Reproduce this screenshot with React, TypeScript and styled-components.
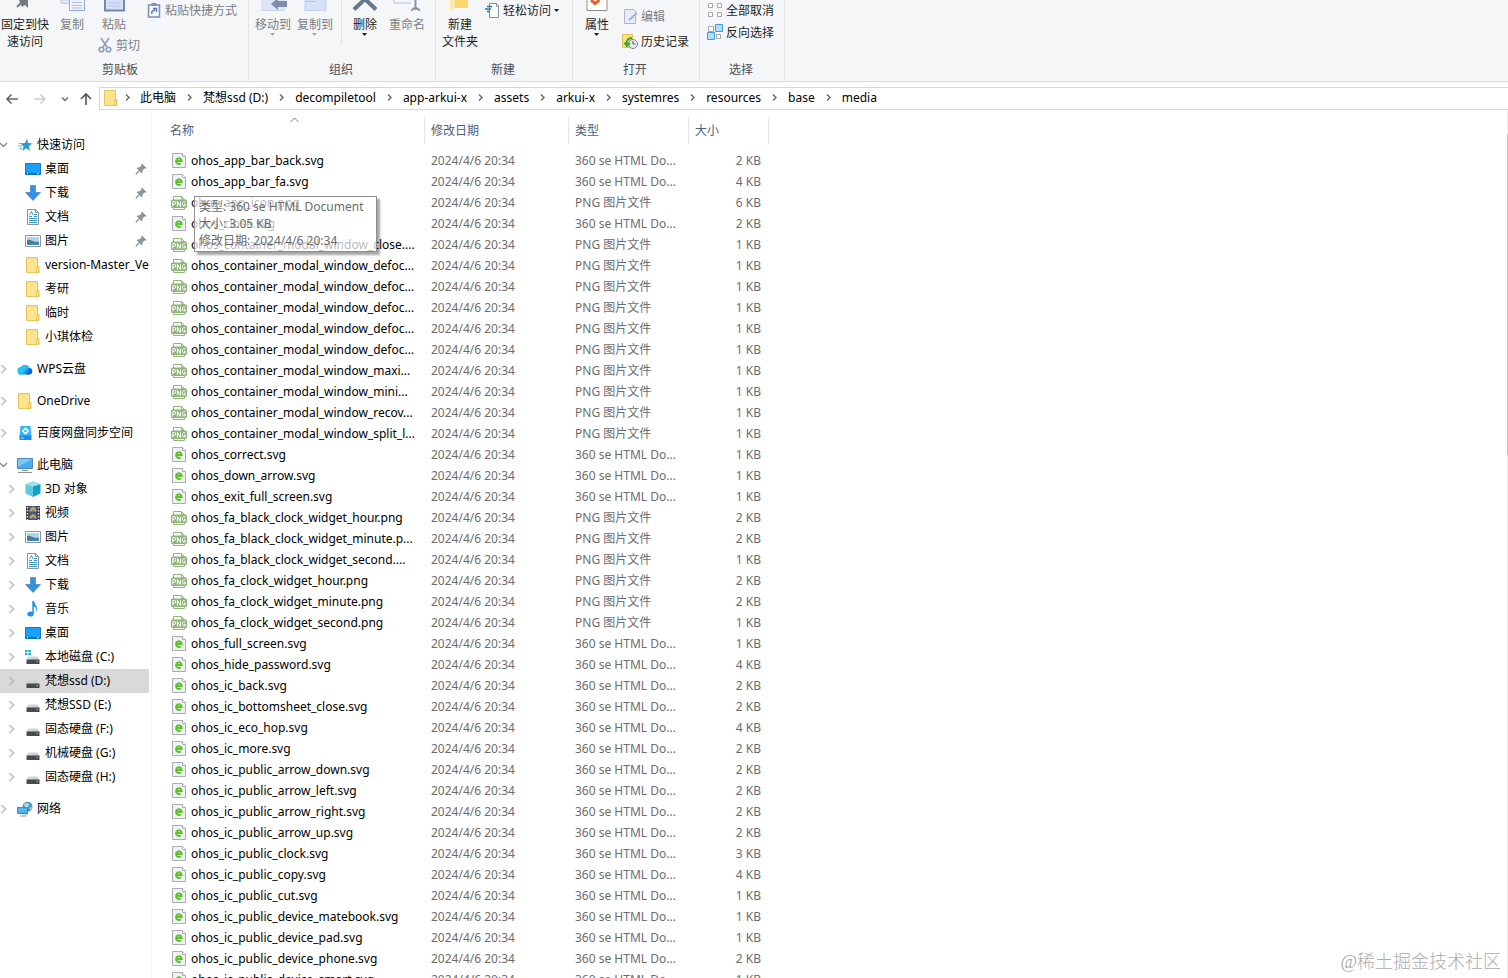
import React from 'react';
import styled, { createGlobalStyle } from 'styled-components';

const Global = createGlobalStyle`
  * { box-sizing: border-box; }
  html, body { margin: 0; background: #fff; }
  body, button {
    font-family: "Noto Sans", "Noto Sans CJK SC", sans-serif;
    font-size: 12px;
    line-height: 17px;
    color: #000;
  }
  button { margin: 0; padding: 0; border: 0; background: none; text-align: center; }
  svg { display: block; flex: none; }
`;

const Window = styled.div`
  position: relative;
  display: flex;
  flex-direction: column;
  height: 100vh;
  overflow: hidden;
`;

/* ---------- ribbon ---------- */

const Ribbon = styled.header`
  display: flex;
  flex: none;
  height: 82px;
  background: #f5f6f7;
  border-bottom: 1px solid #dadbdc;
`;

const Group = styled.section<{ $width: number }>`
  display: flex;
  flex-direction: column;
  width: ${p => p.$width}px;
  padding-bottom: 3px;
  border-right: 1px solid #e2e3e4;
`;

const GroupBody = styled.div`
  display: flex;
  align-items: flex-start;
  flex: 1;
`;

const GroupLabel = styled.h2<{ $inset?: number }>`
  margin: 0;
  padding-right: ${p => p.$inset ?? 2}px;
  font-size: 12px;
  font-weight: 400;
  line-height: 17px;
  text-align: center;
  color: #4c4f54;
`;

const Stack = styled.div<{ $top?: number; $gap?: number; $left?: number }>`
  display: flex;
  flex-direction: column;
  align-items: flex-start;
  gap: ${p => p.$gap ?? 0}px;
  padding-top: ${p => p.$top ?? 0}px;
  padding-left: ${p => p.$left ?? 0}px;
`;

const BigButton = styled.button<{ $width: number; $off?: boolean }>`
  display: flex;
  flex-direction: column;
  align-items: center;
  gap: 4px;
  width: ${p => p.$width}px;
  color: ${p => (p.$off ? '#7b7e83' : '#1e1e1e')};
  white-space: pre;
`;

const BigText = styled.span`
  display: flex;
  flex-direction: column;
  align-items: center;
`;

const SmallButton = styled.button<{ $off?: boolean }>`
  display: flex;
  align-items: center;
  gap: 3px;
  height: 20px;
  color: ${p => (p.$off ? '#7b7e83' : '#1e1e1e')};
  white-space: nowrap;
`;

const Divider = styled.span`
  width: 1px;
  height: 44px;
  margin: 0 2px 0 5px;
  background: #e2e3e4;
`;

/* ---------- address bar ---------- */

const AddressRow = styled.nav`
  display: flex;
  flex: none;
  align-items: stretch;
  height: 28px;
  padding-top: 5px;
`;

const NavButtons = styled.div`
  display: flex;
  align-items: center;
  width: 99px;
  padding-left: 5px;
  gap: 14px;
  button:last-child { margin-left: -3px; }
`;

const Crumbs = styled.ol`
  display: flex;
  align-items: center;
  flex: 1;
  margin: 0;
  padding: 0 0 2px 3px;
  list-style: none;
  border: 1px solid #d9d9d9;
  border-right: 0;
`;

const Crumb = styled.li`
  display: flex;
  align-items: center;
  white-space: nowrap;
  a { color: #000; text-decoration: none; }
  svg { margin: 0 9px; }
  &:first-of-type svg { margin: 0 8px 0 4px; }
`;

/* ---------- body ---------- */

const Body = styled.div`
  display: flex;
  flex: 1;
  min-height: 0;
`;

const Sidebar = styled.aside`
  flex: none;
  width: 152px;
  padding: 23px 2px 0 0;
  border-right: 1px solid #f3f3f3;
`;

const Tree = styled.ul`
  margin: 0 0 8px;
  padding: 0;
  list-style: none;
`;

const TreeRow = styled.li<{ $level: number; $selected?: boolean }>`
  display: flex;
  align-items: center;
  height: 24px;
  padding-bottom: 1px;
  padding-left: ${p => (p.$level ? 8 : 0)}px;
  background: ${p => (p.$selected ? '#d9d9d9' : 'transparent')};
`;

const Toggle = styled.span`
  flex: none;
  width: 17px;
`;

const TreeLink = styled.a`
  display: flex;
  flex: 1;
  align-items: center;
  gap: 4px;
  min-width: 0;
  color: #000;
  text-decoration: none;
  white-space: nowrap;
  overflow: hidden;
`;

const TreeName = styled.span`
  flex: 1;
  overflow: hidden;
`;

const PinSlot = styled.span`
  flex: none;
  width: 14px;
`;

const Content = styled.main`
  flex: 1;
  min-width: 0;
  padding-top: 7px;
  overflow: hidden;
`;

const ScrollTrack = styled.div`
  flex: none;
  width: 1px;
  padding-top: 24px;
  background: #f0f0f0;
`;

const ScrollThumb = styled.div`
  height: 38%;
  background: #c4c4c4;
`;

const FileTable = styled.table`
  table-layout: fixed;
  width: 617px;
  border-collapse: separate;
  border-spacing: 0;
`;

const HeadCell = styled.th<{ $first?: boolean }>`
  position: relative;
  height: 27px;
  padding: 0 0 0 ${p => (p.$first ? 18 : 6)}px;
  border-right: 1px solid #e5e5e5;
  font-weight: 400;
  text-align: left;
  color: #4c607a;
`;

const SortMark = styled.span`
  position: absolute;
  top: 0;
  left: 138px;
`;

const SpacerRow = styled.tr`
  height: 6px;
`;

const Cell = styled.td<{ $right?: boolean }>`
  height: 21px;
  padding: 0 8px 0 6px;
  color: #6d6d6d;
  text-align: ${p => (p.$right ? 'right' : 'left')};
  white-space: nowrap;
`;

const NameCell = styled(Cell)`
  padding: 0 0 0 19px;
`;

const FileLink = styled.a`
  display: flex;
  align-items: center;
  gap: 4px;
  color: #000;
  text-decoration: none;
`;

const Tooltip = styled.div`
  position: absolute;
  top: 196px;
  left: 194px;
  width: 183px;
  padding: 1px 4px 2px;
  border: 1px solid #8f8f8f;
  background: rgba(255, 255, 255, 0.72);
  box-shadow: 3px 3px 2px rgba(0, 0, 0, 0.35);
  color: #6b6b6b;
  white-space: nowrap;
  p { margin: 0; }
`;

const Watermark = styled.div`
  position: absolute;
  right: 7px;
  bottom: 3px;
  font-size: 18px;
  font-weight: 300;
  line-height: 26px;
  font-family: "Liberation Serif", "Noto Sans CJK SC", serif;
  color: #acacac;
`;

/* ---------- icons ---------- */

const Chevron = () => (
  <svg width="9" height="9" viewBox="0 0 9 9" fill="none" stroke="#666" strokeWidth="1.4"><path d="M3 1.5 6 4.5 3 7.5" /></svg>
);
const Right = () => (
  <svg width="8" height="10" viewBox="0 0 8 10" fill="none" stroke="#b8b8b8" strokeWidth="1.3"><path d="M1.5 1 5.5 5 1.5 9" /></svg>
);
const Down = () => (
  <svg width="8" height="8" viewBox="0 0 8 8" fill="none" stroke="#888" strokeWidth="1.4"><path d="M0 2 3.5 5.5 7 2" /></svg>
);
const Caret = ({ color = '#1e1e1e' }: { color?: string }) => (
  <svg width="5" height="3" viewBox="0 0 5 3"><path d="M0 0h5L2.5 3z" fill={color} /></svg>
);
const Folder = () => (
  <svg width="16" height="16" viewBox="0 0 16 16">
    <path d="M1.5.5h11v9h1.500v6H1.500z" fill="#fbe38f" stroke="#e6c65c" />
    <path d="M11.500 15V10.500h2V15z" fill="#fff0b0" stroke="#dfbb4a" strokeWidth=".8" />
  </svg>
);
const Star = () => (
  <svg width="16" height="16" viewBox="0 0 16 16">
    <path d="M10 1.500 11 6l4.500.500-3.600 2.700 1 4.800-3.600-2.700-4.200 2.700 1.500-4.600L3.800 6.700 8 6z" fill="#2f97dc" />
    <path d="M2 6.500h4M1 9h4M2.500 11.500h2.500" stroke="#5db4ea" />
  </svg>
);
const Desktop = () => (
  <svg width="16" height="16" viewBox="0 0 16 16">
    <path d="M.5 2.500h15v11H.5z" fill="#18a0fb" stroke="#0f78c8" />
    <path d="M1 12.500h14" stroke="#0b5fa5" /><path d="M2 12.500h1M12 12.500h2" stroke="#fff" />
  </svg>
);
const Download = () => (
  <svg width="16" height="16" viewBox="0 0 16 16"><path d="M5.500.5h5v7h5L8 15.500.5 7.500h5z" fill="#3c8ddd" stroke="#2b78c6" strokeWidth=".6" /></svg>
);
const Doc = () => (
  <svg width="16" height="16" viewBox="0 0 16 16">
    <path d="M2.500.5h8l3 3v12h-11z" fill="#fff" stroke="#8b949c" /><path d="M10.500.5v3h3" fill="none" stroke="#8b949c" />
    <path d="M4.500 6 6.500 2.500 8 6M4 7.500h3M9 5.500h3M9 7.500h3M4 9.500h8M4 11.500h8M4 13.500h8" stroke="#3f97d2" fill="none" />
  </svg>
);
const Picture = () => (
  <svg width="16" height="16" viewBox="0 0 16 16">
    <path d="M.5 2.500h15v11H.5z" fill="#fff" stroke="#8c959e" />
    <path d="M2 4h12v8H2z" fill="#a8d6f3" /><path d="M2 7c3-1 5 1 7 1.500s4 0 5 1V12H2z" fill="#4d7d86" /><path d="M2 10.500h12V12H2z" fill="#3d8cc4" />
  </svg>
);
const Pin = () => (
  <svg width="12" height="12" viewBox="0 0 12 12">
    <path d="M7 .5 11.500 5l-1 .8-1-.3L7.700 7.300 7.500 9.500l-1 .8L1.700 5.500l.8-1 2.200-.2L6.500 2.500l-.300-1z" fill="#8d959b" />
    <path d="M4 8 .8 11.200" stroke="#8d959b" strokeWidth="1.300" />
  </svg>
);
const Cloud = () => (
  <svg width="16" height="16" viewBox="0 0 16 16">
    <path d="M4.500 13.500a3.600 3.600 0 0 1-.5-7.200A4.800 4.800 0 0 1 12.500 7a3.300 3.300 0 0 1 0 6.500z" fill="#1b8df0" />
    <path d="M4 6.300A4.800 4.800 0 0 1 12.500 7C9 6.500 8.500 10.500 4.500 13.500a3.600 3.600 0 0 1-.5-7.200z" fill="#26c2f2" />
    <path d="M8.500 13.500c3-1 3-5 4-6.500a3.300 3.300 0 0 1 0 6.500z" fill="#155fe0" />
  </svg>
);
const Baidu = () => (
  <svg width="16" height="16" viewBox="0 0 16 16">
    <path d="M3.500 1h10l1 10h-12z" fill="#38b6f8" /><path d="M2.500 10.500h12V15h-12z" fill="#1d8bea" />
    <path d="M8.500 3.300 11.200 6 8.500 8.700 5.800 6z" fill="none" stroke="#fff" strokeWidth="1.500" /><path d="M4.500 13h2" stroke="#fff" />
  </svg>
);
const Computer = () => (
  <svg width="16" height="16" viewBox="0 0 16 16">
    <path d="M.5 1.500h15v10H.5z" fill="#4aaeea" stroke="#4d88ae" /><path d="M1 2h14L1 10z" fill="#7cc9f5" />
    <path d="M5 13.500h6M1 15.500h14" stroke="#8a959c" />
  </svg>
);
const Cube = () => (
  <svg width="16" height="16" viewBox="0 0 16 16">
    <path d="M8 0 15.500 3 8 5.500.5 3z" fill="#9be3ee" /><path d="M.5 3 8 5.500V16L.5 12.500z" fill="#5fcbdc" /><path d="M15.500 3 8 5.500V16l7.500-3.500z" fill="#169fc0" />
  </svg>
);
const Video = () => (
  <svg width="16" height="16" viewBox="0 0 16 16">
    <path d="M1 1h14v14H1z" fill="#3d3d3d" /><path d="M4.500 1.500h7v6h-7z" fill="#4d79c2" /><path d="M4.500 8.500h7v6h-7z" fill="#496fb4" />
    <path d="M5 6 8 3l3 3M5 13l3-3 3 3" stroke="#e0a33c" strokeWidth="1.800" fill="none" />
    <path d="M2.500 2v13M13.500 2v13" stroke="#e8e8e8" strokeWidth="1.500" strokeDasharray="1.500 1.500" />
  </svg>
);
const Music = () => (
  <svg width="16" height="16" viewBox="0 0 16 16">
    <ellipse cx="5.500" cy="13" rx="3.200" ry="2.500" fill="#1c93e3" /><path d="M7.300 0v13h1.500V5.500c3 1 3 3.500 1.700 6C14.500 7 10 5 9 0z" fill="#1c93e3" />
  </svg>
);
const Disk = ({ system }: { system?: boolean }) => (
  <svg width="16" height="16" viewBox="0 0 16 16">
    {system && <path d="M0 1h2.500v2.300H0zM3.300 1H6v2.300H3.300zM0 4h2.500v2.300H0zM3.300 4H6v2.300H3.300z" fill="#19b5d8" />}
    <path d="M3.500 7.500h9L14.500 11h-13z" fill="#cfd2d4" /><path d="M1.500 10.500h13V15h-13z" fill="#474b4e" /><path d="M11.500 12.500h1.500" stroke="#7fe08c" />
  </svg>
);
const Network = () => (
  <svg width="16" height="16" viewBox="0 0 16 16">
    <circle cx="10.500" cy="5.800" r="5" fill="#5598bd" /><path d="M7 3c2-2 3 0 4-.5s2 2 0 3-1 2-3 1zM12 7l3-1-1 3z" fill="#b2d9e7" />
    <path d="M.5 6.500h10v6H.5z" fill="#52b6ef" stroke="#3c85b5" transform="rotate(4 5 9)" /><path d="M3 15h6" stroke="#8a959c" />
  </svg>
);
const HtmlFile = () => (
  <svg width="16" height="16" viewBox="0 0 16 16">
    <path d="M1.500.5h10l3 3v11h-13z" fill="#f1f2f5" stroke="#a9adb3" /><path d="M11.500.5v3h3" fill="#fff" stroke="#a9adb3" />
    <path d="M5.300 8h5.400a2.800 2.800 0 1 0-.9 2.200" fill="none" stroke="#5dc22b" strokeWidth="2" />
  </svg>
);
const PngFile = () => (
  <svg width="16" height="16" viewBox="0 0 16 16">
    <path d="M2.500 5V1.500h8l3 3V5M2.500 12v2.500h11V12" fill="#fff" stroke="#92b67d" /><path d="M10.500 1.500v3h3" fill="none" stroke="#92b67d" />
    <rect x="0" y="4.500" width="16" height="8.500" rx="1.500" fill="#8fb478" />
    <path d="M1.800 11.500v-5h1.500a1.300 1.300 0 0 1 0 2.800H1.800M6.400 11.500v-5l3 5v-5M14.400 6.800h-1.200a1.500 1.500 0 0 0-1.600 2.200c0 2 .8 2.200 2.600 2V9.200h-1.200" fill="none" stroke="#fff" strokeWidth="1" />
  </svg>
);

const Large = ({ children }: { children: React.ReactNode }) => (
  <svg width="32" height="12" viewBox="0 0 32 12">{children}</svg>
);
const Small = ({ children }: { children: React.ReactNode }) => (
  <svg width="16" height="16" viewBox="0 0 16 16">{children}</svg>
);

/* ---------- data ---------- */

type TreeItem = { name: string; icon: React.ReactNode; pin?: boolean; arrow?: boolean; selected?: boolean };
type TreeGroup = { root: TreeItem; open?: boolean; items?: TreeItem[] };

const tree: TreeGroup[] = [
  {
    root: { name: '快速访问', icon: <Star /> },
    open: true,
    items: [
      { name: '桌面', icon: <Desktop />, pin: true },
      { name: '下载', icon: <Download />, pin: true },
      { name: '文档', icon: <Doc />, pin: true },
      { name: '图片', icon: <Picture />, pin: true },
      { name: 'version-Master_Ve', icon: <Folder /> },
      { name: '考研', icon: <Folder /> },
      { name: '临时', icon: <Folder /> },
      { name: '小琪体检', icon: <Folder /> },
    ],
  },
  { root: { name: 'WPS云盘', icon: <Cloud /> } },
  { root: { name: 'OneDrive', icon: <Folder /> } },
  { root: { name: '百度网盘同步空间', icon: <Baidu /> } },
  {
    root: { name: '此电脑', icon: <Computer /> },
    open: true,
    items: [
      { name: '3D 对象', icon: <Cube />, arrow: true },
      { name: '视频', icon: <Video />, arrow: true },
      { name: '图片', icon: <Picture />, arrow: true },
      { name: '文档', icon: <Doc />, arrow: true },
      { name: '下载', icon: <Download />, arrow: true },
      { name: '音乐', icon: <Music />, arrow: true },
      { name: '桌面', icon: <Desktop />, arrow: true },
      { name: '本地磁盘 (C:)', icon: <Disk system />, arrow: true },
      { name: '梵想ssd (D:)', icon: <Disk />, arrow: true, selected: true },
      { name: '梵想SSD (E:)', icon: <Disk />, arrow: true },
      { name: '固态硬盘 (F:)', icon: <Disk />, arrow: true },
      { name: '机械硬盘 (G:)', icon: <Disk />, arrow: true },
      { name: '固态硬盘 (H:)', icon: <Disk />, arrow: true },
    ],
  },
  { root: { name: '网络', icon: <Network /> } },
];

const path = ['此电脑', '梵想ssd (D:)', 'decompiletool', 'app-arkui-x', 'assets', 'arkui-x', 'systemres', 'resources', 'base', 'media'];

const files: [string, 'svg' | 'png', number][] = [
  ['ohos_app_bar_back.svg', 'svg', 2],
  ['ohos_app_bar_fa.svg', 'svg', 4],
  ['ohos_app_icon.png', 'png', 6],
  ['ohos_close.svg', 'svg', 2],
  ['ohos_container_modal_window_close....', 'png', 1],
  ['ohos_container_modal_window_defoc...', 'png', 1],
  ['ohos_container_modal_window_defoc...', 'png', 1],
  ['ohos_container_modal_window_defoc...', 'png', 1],
  ['ohos_container_modal_window_defoc...', 'png', 1],
  ['ohos_container_modal_window_defoc...', 'png', 1],
  ['ohos_container_modal_window_maxi...', 'png', 1],
  ['ohos_container_modal_window_mini...', 'png', 1],
  ['ohos_container_modal_window_recov...', 'png', 1],
  ['ohos_container_modal_window_split_l...', 'png', 1],
  ['ohos_correct.svg', 'svg', 1],
  ['ohos_down_arrow.svg', 'svg', 1],
  ['ohos_exit_full_screen.svg', 'svg', 1],
  ['ohos_fa_black_clock_widget_hour.png', 'png', 2],
  ['ohos_fa_black_clock_widget_minute.p...', 'png', 2],
  ['ohos_fa_black_clock_widget_second....', 'png', 1],
  ['ohos_fa_clock_widget_hour.png', 'png', 2],
  ['ohos_fa_clock_widget_minute.png', 'png', 2],
  ['ohos_fa_clock_widget_second.png', 'png', 1],
  ['ohos_full_screen.svg', 'svg', 1],
  ['ohos_hide_password.svg', 'svg', 4],
  ['ohos_ic_back.svg', 'svg', 2],
  ['ohos_ic_bottomsheet_close.svg', 'svg', 2],
  ['ohos_ic_eco_hop.svg', 'svg', 4],
  ['ohos_ic_more.svg', 'svg', 2],
  ['ohos_ic_public_arrow_down.svg', 'svg', 2],
  ['ohos_ic_public_arrow_left.svg', 'svg', 2],
  ['ohos_ic_public_arrow_right.svg', 'svg', 2],
  ['ohos_ic_public_arrow_up.svg', 'svg', 2],
  ['ohos_ic_public_clock.svg', 'svg', 3],
  ['ohos_ic_public_copy.svg', 'svg', 4],
  ['ohos_ic_public_cut.svg', 'svg', 1],
  ['ohos_ic_public_device_matebook.svg', 'svg', 1],
  ['ohos_ic_public_device_pad.svg', 'svg', 1],
  ['ohos_ic_public_device_phone.svg', 'svg', 2],
  ['ohos_ic_public_device_smart.svg', 'svg', 1],
];

/* ---------- parts ---------- */

const RibbonBar = () => (
  <Ribbon>
    <Group $width={249}>
      <GroupBody>
        <BigButton $width={50}>
          <Large><path d="M8 7 14 1" stroke="#747b80" strokeWidth="2" /><path d="M10 0h9v8l-3-3-3 2z" fill="#747b80" /></Large>
          <BigText><span>固定到快</span><span>速访问</span></BigText>
        </BigButton>
        <BigButton $width={44} $off>
          <Large>
            <path d="M5 0h9v7M5 0v3h8" fill="none" stroke="#a9b9dc" />
            <path d="M13.500-1h15v11.500h-15z" fill="#eef3fc" stroke="#93a9d6" /><path d="M16 2.500h10M16 5.500h10M16 8h10" stroke="#b1c2e4" />
          </Large>
          <span>复制</span>
        </BigButton>
        <Stack>
          <BigButton $width={40} $off>
            <Large><path d="M7-1h19v11.500H7z" fill="#d4e0f5" stroke="#7387b0" strokeWidth="2" /><path d="M10 3h13M10 6h13" stroke="#b8c9e8" /></Large>
            <span>粘贴</span>
          </BigButton>
          <Stack $top={2} $left={3}>
            <SmallButton $off>
              <Small>
                <path d="M4 1l6 9M12 1 6 10" stroke="#8f9bb0" strokeWidth="1.500" />
                <circle cx="4.500" cy="12.500" r="2.300" fill="none" stroke="#8d9fc4" strokeWidth="1.600" /><circle cx="11.500" cy="12.500" r="2.300" fill="none" stroke="#8d9fc4" strokeWidth="1.600" />
              </Small>
              剪切
            </SmallButton>
          </Stack>
        </Stack>
        <Stack $left={6}>
          <SmallButton $off>
            <Small>
              <path d="M2.500 3h11v12h-11z" fill="#f4f7fd" stroke="#7d8fb8" strokeWidth="1.500" /><path d="M5.500 1h5v3h-5z" fill="#8292b5" />
              <path d="M6 12c-1-2 1-4 3-4M7 6.500h3.500V10" fill="none" stroke="#5b76b5" strokeWidth="1.500" />
            </Small>
            粘贴快捷方式
          </SmallButton>
        </Stack>
      </GroupBody>
      <GroupLabel $inset={8}>剪贴板</GroupLabel>
    </Group>

    <Group $width={187}>
      <GroupBody>
        <Stack $left={3}>
          <BigButton $width={42} $off>
            <Large><path d="M5-1h22v11.500H5z" fill="#dde6f6" stroke="#c8d4ec" /><path d="M14 4 21-2v3h9v6h-9v3z" fill="#7d8fae" /></Large>
            <BigText><span>移动到</span><Caret color="#a5a8ac" /></BigText>
          </BigButton>
        </Stack>
        <BigButton $width={42} $off>
          <Large><path d="M6-1h21v11.500H6z" fill="#d5e1f5" stroke="#c2d0ea" /><path d="M6.500 1.500H17" stroke="#b5c5e4" /></Large>
          <BigText><span>复制到</span><Caret color="#a5a8ac" /></BigText>
        </BigButton>
        <Divider />
        <BigButton $width={42}>
          <Large><path d="M5 9.500 16-1 27 9.500" fill="none" stroke="#66788f" strokeWidth="4" /></Large>
          <BigText><span>删除</span><Caret /></BigText>
        </BigButton>
        <BigButton $width={42} $off>
          <Large><path d="M3 0v3h17" fill="none" stroke="#b3c2e0" /><path d="M24.500-1v11M20 10.500l4.500-3 4.500 3" fill="none" stroke="#8594b5" strokeWidth="2" /></Large>
          <span>重命名</span>
        </BigButton>
      </GroupBody>
      <GroupLabel>组织</GroupLabel>
    </Group>

    <Group $width={137}>
      <GroupBody>
        <BigButton $width={48}>
          <Large><path d="M6-1h18v9H10l-4 3z" fill="#fbd76a" /><path d="M6-1h5v8l-5 4z" fill="#fdeaa8" /></Large>
          <BigText><span>新建</span><span>文件夹</span></BigText>
        </BigButton>
        <SmallButton>
          <Small>
            <path d="M5.500 1.500h7l2 2v12h-9z" fill="#fff" stroke="#8b9197" /><path d="M12.500 1.500v3h2" fill="none" stroke="#8b9197" />
            <path d="M3 4.500h5M1 7h6M3 9.500h3" stroke="#2a76b8" strokeWidth="1.300" />
          </Small>
          轻松访问
          <Caret />
        </SmallButton>
      </GroupBody>
      <GroupLabel>新建</GroupLabel>
    </Group>

    <Group $width={127}>
      <GroupBody>
        <BigButton $width={48}>
          <Large><path d="M6-1h20v11.500H6z" fill="#fff" stroke="#8f8f8f" /><path d="m10 0 4 3.500L18.500 0" fill="none" stroke="#e8632b" strokeWidth="3" /></Large>
          <BigText><span>属性</span><Caret /></BigText>
        </BigButton>
        <Stack $top={6} $gap={5} $left={1}>
          <SmallButton $off>
            <Small><path d="M2.500 1.500h9l2 2v12h-11z" fill="#e6edf9" stroke="#aab6d0" /><path d="M7 12 15 5" stroke="#a3b2d4" strokeWidth="2" /></Small>
            编辑
          </SmallButton>
          <SmallButton>
            <Small>
              <path d="M.5 1.500h10v13H.5z" fill="#fbe07c" stroke="#e5c34d" /><circle cx="11" cy="11" r="4.500" fill="#eceff1" stroke="#7b848b" />
              <path d="M11 8v3h2.500" fill="none" stroke="#555" /><path d="M10 5C5 5 4 9 5 12M2.500 9.500 5 13l3-3" fill="none" stroke="#32a83c" strokeWidth="2" />
            </Small>
            历史记录
          </SmallButton>
        </Stack>
      </GroupBody>
      <GroupLabel>打开</GroupLabel>
    </Group>

    <Group $width={85}>
      <GroupBody>
        <Stack $left={7} $gap={2}>
          <SmallButton>
            <Small><path d="M1.500 1.500h4v4h-4zM10.500 1.500h4v4h-4zM1.500 10.500h4v4h-4zM10.500 10.500h4v4h-4z" fill="#fff" stroke="#a4a9ad" /></Small>
            全部取消
          </SmallButton>
          <SmallButton>
            <Small>
              <path d="M1.500 2.500h5v5h-5zM9.500 10.500h4v4h-4z" fill="#fff" stroke="#a4a9ad" />
              <path d="M8.500.5h7v7h-7zM.5 8.500h7v7h-7z" fill="#b5dcf7" stroke="#3f9bdc" />
            </Small>
            反向选择
          </SmallButton>
        </Stack>
      </GroupBody>
      <GroupLabel>选择</GroupLabel>
    </Group>
  </Ribbon>
);

const AddressBar = () => (
  <AddressRow>
    <NavButtons>
      <button aria-label="后退"><svg width="14" height="12" viewBox="0 0 14 12" fill="none" stroke="#666" strokeWidth="1.600"><path d="M13 6H2M6.500 1.500 2 6l4.500 4.500" /></svg></button>
      <button aria-label="前进"><svg width="14" height="12" viewBox="0 0 14 12" fill="none" stroke="#ccc" strokeWidth="1.600"><path d="M1 6h11M7.500 1.500 12 6l-4.500 4.500" /></svg></button>
      <button aria-label="最近"><svg width="8" height="8" viewBox="0 0 8 8" fill="none" stroke="#666" strokeWidth="1.400"><path d="M1 2.500 4 5.500 7 2.500" /></svg></button>
      <button aria-label="上移"><svg width="12" height="14" viewBox="0 0 12 14" fill="none" stroke="#555" strokeWidth="1.600"><path d="M6 13V2M1 7l5-5 5 5" /></svg></button>
    </NavButtons>
    <Crumbs>
      <Folder />
      {path.map(name => (
        <Crumb key={name}><Chevron /><a href="#">{name}</a></Crumb>
      ))}
    </Crumbs>
  </AddressRow>
);

const TreeEntry = ({ item, level, open }: { item: TreeItem; level: number; open?: boolean }) => (
  <TreeRow $level={level} $selected={item.selected}>
    <Toggle>{level === 0 ? (open ? <Down /> : <Right />) : item.arrow && <Right />}</Toggle>
    <TreeLink href="#">
      {item.icon}
      <TreeName>{item.name}</TreeName>
      {item.pin && <PinSlot><Pin /></PinSlot>}
    </TreeLink>
  </TreeRow>
);

export default function App() {
  return (
    <Window>
      <Global />
      <RibbonBar />
      <AddressBar />
      <Body>
        <Sidebar>
          {tree.map(group => (
            <Tree key={group.root.name}>
              <TreeEntry item={group.root} level={0} open={group.open} />
              {group.items?.map(item => <TreeEntry key={item.name} item={item} level={1} />)}
            </Tree>
          ))}
        </Sidebar>
        <Content>
          <FileTable>
            <colgroup>
              <col style={{ width: 273 }} />
              <col style={{ width: 144 }} />
              <col style={{ width: 120 }} />
              <col style={{ width: 80 }} />
            </colgroup>
            <thead>
              <tr>
                <HeadCell $first>
                  名称
                  <SortMark><svg width="9" height="6" viewBox="0 0 9 6" fill="none" stroke="#777"><path d="M.5 5 4.500 1l4 4" /></svg></SortMark>
                </HeadCell>
                <HeadCell>修改日期</HeadCell>
                <HeadCell>类型</HeadCell>
                <HeadCell>大小</HeadCell>
              </tr>
            </thead>
            <tbody>
              <SpacerRow />
              {files.map(([name, kind, size], i) => (
                <tr key={i}>
                  <NameCell><FileLink href="#">{kind === 'svg' ? <HtmlFile /> : <PngFile />}{name}</FileLink></NameCell>
                  <Cell>2024/4/6 20:34</Cell>
                  <Cell>{kind === 'svg' ? '360 se HTML Do...' : 'PNG 图片文件'}</Cell>
                  <Cell $right>{size} KB</Cell>
                </tr>
              ))}
            </tbody>
          </FileTable>
        </Content>
        <ScrollTrack><ScrollThumb /></ScrollTrack>
      </Body>
      <Tooltip role="tooltip">
        <p>类型: 360 se HTML Document</p>
        <p>大小: 3.05 KB</p>
        <p>修改日期: 2024/4/6 20:34</p>
      </Tooltip>
      <Watermark>@稀土掘金技术社区</Watermark>
    </Window>
  );
}
